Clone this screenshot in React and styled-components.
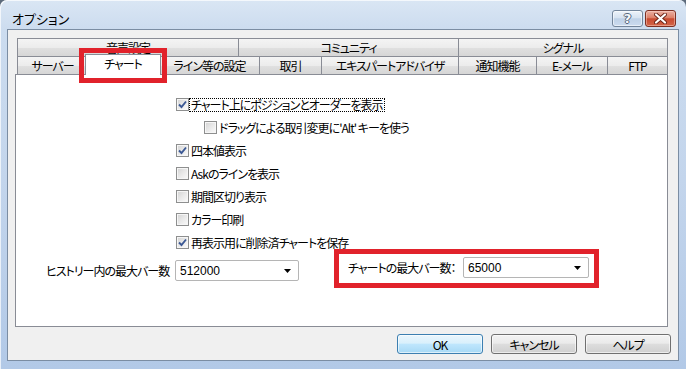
import React from "react";
import styled, { createGlobalStyle, css } from "styled-components";

const FONT = `"Noto Sans CJK JP", "Noto Sans", sans-serif`;
const TAB_BORDER = "#898c95";

const GlobalStyle = createGlobalStyle`
  html, body { margin: 0; padding: 0; background: #5d6b7c; }
  body {
    font-family: ${FONT};
    font-size: 12px;
    letter-spacing: -1px;
    color: #000;
    font-feature-settings: "palt" 1;
  }
  * { box-sizing: border-box; }
`;

const Window = styled.div`
  width: 686px;
  height: 369px;
  display: flex;
  flex-direction: column;
  padding: 0 7px 8px 7px;
  border-radius: 7px 7px 0 0;
  background: linear-gradient(180deg, #dae6f4 0px, #ccdcef 29px, #c3d5ec 180px, #b2c9e7 369px);
  box-shadow: inset 1px 1px 0 rgba(255, 255, 255, 0.7);
`;

const TitleBar = styled.div`
  height: 29px;
  flex: none;
  display: flex;
  align-items: flex-start;
  justify-content: space-between;
  padding: 0 3px 0 5px;
`;

const Title = styled.div`
  margin-top: 10px;
  font-size: 13px;
  letter-spacing: 0;
  line-height: 17px;
  color: #000;
`;

const CaptionButtons = styled.div`
  margin-top: 10px;
  display: flex;
  gap: 2px;
`;

const CaptionButton = styled.div`
  width: 31px;
  height: 17px;
  border-radius: 3px;
  display: flex;
  align-items: center;
  justify-content: center;
  ${(p) =>
    p.$variant === "close"
      ? css`
          border: 1px solid #7d2f22;
          background: linear-gradient(#eab0a3 0%, #dd8069 45%, #c84a30 52%, #d3664a 100%);
          box-shadow: inset 0 0 0 1px rgba(255, 220, 210, 0.45);
        `
      : css`
          border: 1px solid #73859b;
          background: linear-gradient(#edf3fa 0%, #d7e3f1 45%, #bfd1e7 52%, #cbdbef 100%);
          box-shadow: inset 0 0 0 1px rgba(255, 255, 255, 0.55);
        `}
`;

const HelpGlyph = styled.span`
  font-family: "DejaVu Sans", sans-serif;
  font-weight: bold;
  font-size: 13px;
  letter-spacing: 0;
  line-height: 13px;
  color: #f6f8fb;
  text-shadow: 1px 0 0 #56667b, -1px 0 0 #56667b, 0 1px 0 #56667b, 0 -1px 0 #56667b;
`;

const Client = styled.div`
  flex: 1;
  display: flex;
  flex-direction: column;
  align-items: flex-start;
  background: #f0f0f0;
  border: 1px solid #7b8da3;
  padding: 8px 0 0 7px;
`;

const TabControl = styled.div`
  position: relative;
  width: 653px;
  display: flex;
  flex-direction: column;
`;

const TabRow = styled.div`
  display: flex;
  height: 18px;
  padding-left: 2px;
`;

const Tab = styled.div`
  position: relative;
  flex: none;
  width: ${(p) => p.$w}px;
  height: 18px;
  display: flex;
  align-items: center;
  justify-content: center;
  border-top: 1px solid ${TAB_BORDER};
  border-left: 1px solid ${TAB_BORDER};
  background: linear-gradient(#f4f4f4 0%, #ececec 50%, #e0e0e0 52%, #d6d6d6 100%);
  white-space: nowrap;
  overflow: hidden;
  line-height: 14px;
  &:last-child {
    border-right: 1px solid ${TAB_BORDER};
  }
  ${(p) =>
    p.$selected &&
    css`
      z-index: 2;
      width: ${p.$w + 4}px;
      height: 21px;
      margin: -2px -2px -1px;
      padding-bottom: 2px;
      background: #fff;
      border-right: 1px solid ${TAB_BORDER};
    `}
`;

const Panel = styled.div`
  position: relative;
  height: 253px;
  background: #fff;
  border: 1px solid ${TAB_BORDER};
  display: flex;
  flex-direction: column;
`;

const Highlight = styled.div`
  border: 5px solid #e1222b;
`;

const TabHighlight = styled(Highlight)`
  position: absolute;
  left: 64px;
  top: 10px;
  width: 88px;
  height: 35px;
  z-index: 3;
`;

const CheckList = styled.div`
  display: flex;
  flex-direction: column;
  gap: 10px;
  padding: 23px 0 0 160px;
`;

const CheckRow = styled.div`
  display: flex;
  align-items: center;
  height: 13px;
  padding-left: ${(p) => p.$indent || 0}px;
`;

const Box = styled.span`
  flex: none;
  width: 13px;
  height: 13px;
  border: 1px solid #8e8f8f;
  background: linear-gradient(135deg, #d2d2d2 0%, #e9e9e9 50%, #fbfbfb 100%);
  box-shadow: inset 0 0 0 1px #f6f6f6;
  display: flex;
  align-items: center;
  justify-content: center;
`;

const CheckLabel = styled.span`
  white-space: nowrap;
  line-height: 12px;
  padding: 0 1px;
  border: 1px ${(p) => (p.$focus ? "dotted #000" : "solid transparent")};
`;

const BottomRow = styled.div`
  display: flex;
  align-items: flex-start;
  padding-left: 30px;
`;

const Field = styled.div`
  display: flex;
  align-items: center;
  margin-top: ${(p) => p.$top || 0}px;
`;

const FieldLabel = styled.span`
  width: ${(p) => p.$w}px;
  white-space: nowrap;
`;

const Combo = styled.div`
  width: ${(p) => p.$w}px;
  height: 21px;
  display: flex;
  align-items: center;
  justify-content: space-between;
  padding: 0 7px 0 4px;
  border: 1px solid #b5b5b5;
  border-radius: 2px;
  background: #fff;
  font-family: "Liberation Sans", ${FONT};
  font-size: 12px;
  letter-spacing: 0;
`;

const ChartHighlight = styled(Highlight)`
  margin-left: 35px;
  padding: 3px 5px 5px 9px;
`;

const ButtonRow = styled.div`
  align-self: stretch;
  display: flex;
  justify-content: flex-end;
  gap: 8px;
  padding-right: 7px;
  margin-top: 7px;
`;

const Button = styled.div`
  width: 86px;
  height: 20px;
  display: flex;
  align-items: center;
  justify-content: center;
  border-radius: 3px;
  font-size: 12px;
  ${(p) =>
    p.$default
      ? css`
          border: 1px solid #3c7fb1;
          background: linear-gradient(#eaf6fd 0%, #d9f0fc 45%, #bee6fd 52%, #a7d9f5 100%);
          box-shadow: inset 0 0 0 1px rgba(255, 255, 255, 0.6);
        `
      : css`
          border: 1px solid #707070;
          background: linear-gradient(#f2f2f2 0%, #ebebeb 45%, #dddddd 52%, #cfcfcf 100%);
          box-shadow: inset 0 0 0 1px rgba(255, 255, 255, 0.6);
        `}
`;

const Check = () => (
  <svg width="9" height="9" viewBox="0 0 9 9">
    <path d="M1 4.5 L3.5 7 L8 1.5" fill="none" stroke="#3b5894" strokeWidth="1.9" strokeLinejoin="miter" />
  </svg>
);

const CheckBox = ({ checked }) => <Box>{checked && <Check />}</Box>;

const Arrow = () => (
  <svg width="7" height="4" viewBox="0 0 7 4">
    <path d="M0 0 H7 L3.5 4 Z" fill="#000" />
  </svg>
);

const CloseX = () => (
  <svg width="13" height="11" viewBox="0 0 13 11">
    <path d="M2 1.5 L11 9.5 M11 1.5 L2 9.5" stroke="#6b2418" strokeWidth="4" strokeLinecap="round" />
    <path d="M2 1.5 L11 9.5 M11 1.5 L2 9.5" stroke="#ffffff" strokeWidth="2.2" strokeLinecap="round" />
  </svg>
);

const topTabs = [
  { label: "音声設定", w: 221 },
  { label: "コミュニティ", w: 220 },
  { label: "シグナル", w: 210 },
];

const mainTabs = [
  { label: "サーバー", w: 70 },
  { label: "チャート", w: 72, selected: true },
  { label: "ライン等の設定", w: 100 },
  { label: "取引", w: 62 },
  { label: "エキスパートアドバイザ", w: 137 },
  { label: "通知機能", w: 78 },
  { label: "E-メール", w: 71 },
  { label: "FTP", w: 61 },
];

const options = [
  { label: "チャート上にポジションとオーダーを表示", checked: true, focus: true },
  { label: "ドラッグによる取引変更に'Alt' キーを使う", checked: false, indent: 28 },
  { label: "四本値表示", checked: true },
  { label: "Askのラインを表示", checked: false },
  { label: "期間区切り表示", checked: false },
  { label: "カラー印刷", checked: false },
  { label: "再表示用に削除済チャートを保存", checked: true },
];

export default function App() {
  return (
    <>
      <GlobalStyle />
      <Window>
        <TitleBar>
          <Title>オプション</Title>
          <CaptionButtons>
            <CaptionButton $variant="help">
              <HelpGlyph>?</HelpGlyph>
            </CaptionButton>
            <CaptionButton $variant="close">
              <CloseX />
            </CaptionButton>
          </CaptionButtons>
        </TitleBar>
        <Client>
          <TabControl>
            <TabRow>
              {topTabs.map((t) => (
                <Tab key={t.label} $w={t.w}>
                  {t.label}
                </Tab>
              ))}
            </TabRow>
            <TabRow>
              {mainTabs.map((t) => (
                <Tab key={t.label} $w={t.w} $selected={t.selected}>
                  {t.label}
                </Tab>
              ))}
            </TabRow>
            <Panel>
              <CheckList>
                {options.map((o) => (
                  <CheckRow key={o.label} $indent={o.indent}>
                    <CheckBox checked={o.checked} />
                    <CheckLabel $focus={o.focus}>{o.label}</CheckLabel>
                  </CheckRow>
                ))}
              </CheckList>
              <BottomRow>
                <Field $top={11}>
                  <FieldLabel $w={129}>ヒストリー内の最大バー数</FieldLabel>
                  <Combo $w={124}>
                    <span>512000</span>
                    <Arrow />
                  </Combo>
                </Field>
                <ChartHighlight>
                  <Field>
                    <FieldLabel $w={115}>チャートの最大バー数：</FieldLabel>
                    <Combo $w={126}>
                      <span>65000</span>
                      <Arrow />
                    </Combo>
                  </Field>
                </ChartHighlight>
              </BottomRow>
            </Panel>
            <TabHighlight />
          </TabControl>
          <ButtonRow>
            <Button $default>OK</Button>
            <Button>キャンセル</Button>
            <Button>ヘルプ</Button>
          </ButtonRow>
        </Client>
      </Window>
    </>
  );
}
